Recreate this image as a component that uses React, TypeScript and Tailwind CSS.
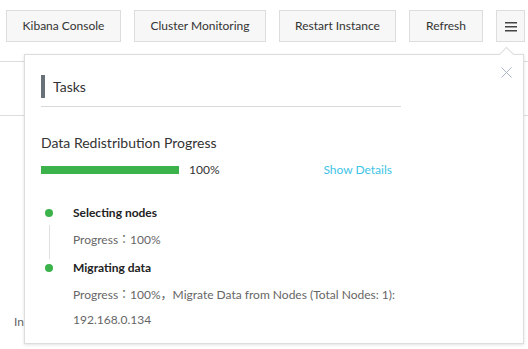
const steps = [
  { title: 'Selecting nodes', lines: ['Progress：100%'] },
  {
    title: 'Migrating data',
    lines: ['Progress：100%，Migrate Data from Nodes (Total Nodes: 1):', '192.168.0.134'],
  },
];

function ToolButton({ label, className }: { label: string; className?: string }) {
  return (
    <button
      className={`h-[32px] border border-[#dddddd] bg-[#f7f7f7] text-[12px] text-[#333] ${className ?? ''}`}
    >
      {label}
    </button>
  );
}

export default function App() {
  return (
    <div className="relative h-[349px] w-[528px] overflow-hidden bg-white font-['Lato','Noto_Sans_CJK_JP',sans-serif] text-[#333]">
      {/* toolbar */}
      <div className="flex items-center gap-[13px] pl-[6px] pt-[10px]">
        <ToolButton label="Kibana Console" className="w-[115px]" />
        <ToolButton label="Cluster Monitoring" className="w-[132px]" />
        <ToolButton label="Restart Instance" className="w-[117px]" />
        <ToolButton label="Refresh" className="w-[74px]" />
        <button className="flex h-[32px] w-[29px] items-center justify-center border border-[#dddddd] bg-[#f7f7f7]">
          <svg width="12" height="11" viewBox="0 0 12 11">
            <rect x="0" y="1" width="12" height="1.5" fill="#444" />
            <rect x="0" y="5" width="12" height="1.5" fill="#444" />
            <rect x="0" y="9" width="12" height="1.5" fill="#444" />
          </svg>
        </button>
      </div>

      {/* page behind the popover */}
      <div className="mt-[19px] h-[55px] border-y border-[#dddddd]" />
      <div className="pl-[14px] pt-[197px] text-[12px] text-[#666]">Instance</div>

      {/* tasks popover */}
      <div className="absolute left-[24px] top-[54px] h-[290px] w-[500px] border border-[#dddddd] bg-white shadow-[0_1px_3px_rgba(0,0,0,0.12)]">
        <div className="absolute -top-[6px] left-[476px] h-[11px] w-[11px] rotate-45 border-l border-t border-[#dddddd] bg-white" />
        <button className="absolute right-[11px] top-[12px] text-[#aab4c8]">
          <svg width="11" height="11" viewBox="0 0 11 11" fill="none" stroke="currentColor" strokeWidth="1">
            <path d="M0.5 0.5 L10.5 10.5 M10.5 0.5 L0.5 10.5" />
          </svg>
        </button>

        <div className="pl-[16px] pr-[122px] pt-[20px]">
          <div className="flex h-[32px] items-start border-b border-[#d9d9d9]">
            <div className="h-[23px] w-[4px] bg-[#687078]" />
            <span className="ml-[8px] text-[14px] leading-[23px] text-[#333]">Tasks</span>
          </div>

          <div className="mt-[26px] text-[14px] leading-[20px]">Data Redistribution Progress</div>
          <div className="mt-[8px] flex items-center pr-[9px]">
            <div className="h-[8px] w-[138px] bg-[#3bb34a]" />
            <span className="ml-[10px] text-[12px] text-[#333]">100%</span>
            <span className="ml-auto text-[12px] text-[#3ec4e6]">Show Details</span>
          </div>
        </div>

        <div className="mt-[24px] pl-[16px] pr-[16px]">
          {steps.map((s, i) => (
            <div key={s.title} className="flex">
              <div className="flex w-[32px] flex-col items-start">
                <div className="ml-[4px] mt-[6px] h-[8px] w-[8px] rounded-full bg-[#3bb34a]" />
                {i < steps.length - 1 && <div className="mb-[-1px] ml-[8px] mt-[8px] w-px flex-1 bg-[#e0e0e0]" />}
              </div>
              <div className="pb-[8px]">
                <div className="text-[12px] font-bold leading-[20px] text-[#222]">{s.title}</div>
                {s.lines.map((l, j) => (
                  <div
                    key={l}
                    className={`${j === 0 ? 'mt-[7px]' : 'mt-[5px]'} text-[12px] leading-[20px] text-[#666]`}
                  >
                    {l}
                  </div>
                ))}
              </div>
            </div>
          ))}
        </div>
      </div>
    </div>
  );
}
